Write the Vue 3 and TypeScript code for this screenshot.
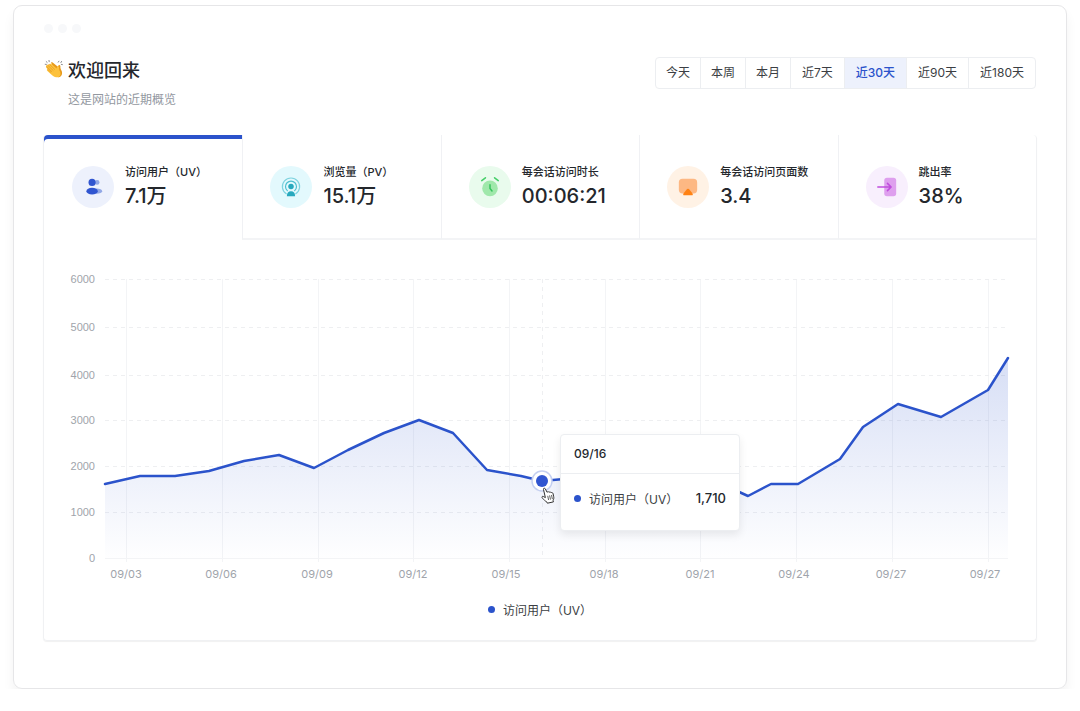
<script setup lang="ts">
import { computed, ref } from 'vue'

type Point = [number, number]

const ranges = ['今天', '本周', '本月', '近7天', '近30天', '近90天', '近180天']
const activeRange = ref('近30天')

const stats = [
  { id: 'users', label: '访问用户（UV）', value: '7.1万' },
  { id: 'views', label: '浏览量（PV）', value: '15.1万' },
  { id: 'time', label: '每会话访问时长', value: '00:06:21' },
  { id: 'pages', label: '每会话访问页面数', value: '3.4' },
  { id: 'bounce', label: '跳出率', value: '38%' },
]
const activeStat = ref('users')

const chart = { width: 992, height: 350, left: 61, right: 964, top: 39, bottom: 318 }

const rows = [
  { label: '6000', y: 39 },
  { label: '5000', y: 87 },
  { label: '4000', y: 135 },
  { label: '3000', y: 180 },
  { label: '2000', y: 226 },
  { label: '1000', y: 272 },
  { label: '0', y: 318 },
]

const columns = [
  { label: '09/03', x: 82, textX: 82 },
  { label: '09/06', x: 178, textX: 177 },
  { label: '09/09', x: 274, textX: 273 },
  { label: '09/12', x: 369, textX: 369 },
  { label: '09/15', x: 465, textX: 462 },
  { label: '09/18', x: 561, textX: 560 },
  { label: '09/21', x: 656, textX: 656 },
  { label: '09/24', x: 752, textX: 750 },
  { label: '09/27', x: 848, textX: 847 },
  { label: '09/27', x: 944, textX: 941 },
]

const points: Point[] = [
  [61, 244], [96, 236], [131, 236], [165, 231], [200, 221], [235, 215], [270, 228],
  [304, 210], [340, 193], [375, 180], [409, 193], [443, 230], [477, 236], [498, 241],
  [520, 239], [600, 232], [660, 236], [704, 256], [727, 244], [754, 244], [796, 219],
  [819, 187], [854, 164], [897, 177], [944, 150], [964, 118],
]
const hover: Point = [498, 241]

const linePath = computed(() => 'M' + points.map((p) => p.join(' ')).join(' L'))
const areaPath = computed(
  () => `${linePath.value} L${chart.right} ${chart.bottom} L${chart.left} ${chart.bottom} Z`,
)
const tooltipPlace = computed(() => ({
  left: `${((hover[0] + 18) / chart.width) * 100}%`,
  top: `${((hover[1] - 47) / chart.height) * 100}%`,
}))
</script>

<template>
  <main class="window">
    <div class="dots" aria-hidden="true"><i></i><i></i><i></i></div>

    <header class="header">
      <div class="welcome">
        <svg class="clap" viewBox="0 0 20 20" aria-hidden="true">
          <g fill="none" stroke="#8d8f93" stroke-width="1" stroke-linecap="round">
            <path d="M2.2 2.6l1 .9M5 1.4l.2 1.3M1.2 5.3l1.2.1M14.2 3.2l.7-1M17.6 2.4l-.7 1.2M18.4 5.6l-1.1-.2" />
          </g>
          <path d="M7 3.6c.8-.8 1.8-.2 2.6.6l4.3 3.6c.3-1.1.7-2 1.7-1.8 1 .3.8 1.5.8 2.7.1 1.6 1.8 3 1.7 5.3 0 2.6-1.8 4.4-4 4.2z" fill="#e79a1c" />
          <path d="M2.4 7.2c-.4-.9.6-1.6 1.3-1 .1-1 1.1-1.4 1.9-.7.3-.9 1.4-1 2.1-.3l4.9 4.4c.3-1.2.6-2.5 1.6-2.4 1.1.1.9 1.5.9 2.7.1 1.6 1.6 2.9 1.4 5-.2 2.4-2 3.7-4.4 3.3-2.7-.5-6.3-3.9-8.9-6.5-.7-.7-.4-1.6.4-1.5l-1.3-1.5c-.5-.6-.4-1.2.1-1.5z" fill="#fdc23c" />
          <path d="M3.7 6.2l5.4 5.2M5.6 5.5l5 4.8M2.4 7.2l5.3 5.3M3.6 10.2l3.2 3.1" fill="none" stroke="#dc8f1d" stroke-width=".6" stroke-linecap="round" />
        </svg>
        <div>
          <h1>欢迎回来</h1>
          <p>这是网站的近期概览</p>
        </div>
      </div>

      <nav class="ranges" aria-label="时间范围">
        <button
          v-for="range in ranges"
          :key="range"
          type="button"
          :class="{ active: range === activeRange, wide: range.length > 2 }"
          @click="activeRange = range"
        >{{ range }}</button>
      </nav>
    </header>

    <section class="panel">
      <div class="stats">
        <button
          v-for="stat in stats"
          :key="stat.id"
          type="button"
          class="stat"
          :class="{ active: stat.id === activeStat }"
          @click="activeStat = stat.id"
        >
          <span class="badge" :class="stat.id">
            <svg v-if="stat.id === 'users'" viewBox="0 0 24 24" aria-hidden="true">
              <circle cx="16.5" cy="7" r="2.6" fill="#92a8e6" />
              <ellipse cx="16" cy="16.5" rx="6" ry="2.8" fill="#92a8e6" />
              <circle cx="11" cy="7" r="3.9" fill="#3055d0" />
              <ellipse cx="11" cy="16.5" rx="6.2" ry="3.7" fill="#3055d0" />
            </svg>
            <svg v-else-if="stat.id === 'views'" viewBox="0 0 24 24" aria-hidden="true">
              <g fill="none" stroke-linecap="round">
                <path d="M6.8 19.4a9.4 9.4 0 1 1 10.4 0" stroke="#7fd3df" stroke-width="1.3" />
                <path d="M8 16a6 6 0 1 1 8 0" stroke="#4dbfd0" stroke-width="1.3" />
              </g>
              <circle cx="12" cy="11.5" r="3" fill="#27a9be" />
              <path d="M7.5 22c0-3.8 1.7-5.500 4.500-5.500s4.500 1.700 4.500 5.500z" fill="#27a9be" />
            </svg>
            <svg v-else-if="stat.id === 'time'" viewBox="0 0 24 24" aria-hidden="true">
              <circle cx="12" cy="13.5" r="8.5" fill="#a0e8ab" />
              <path d="M3 5l4-3M17 2l4 3" fill="none" stroke="#45cf68" stroke-width="1.7" stroke-linecap="round" />
              <path d="M12 9.5v4l2.2 2.8" fill="none" stroke="#35c45b" stroke-width="1.6" stroke-linecap="round" />
            </svg>
            <svg v-else-if="stat.id === 'pages'" viewBox="0 0 24 24" aria-hidden="true">
              <rect x="2" y="3" width="20" height="16" rx="4" fill="#fdb883" />
              <path d="M11 14.3q1-.9 2 0l3.6 4.200q1.600 2.500-.6 2.500H8q-2.200 0-.6-2.500z" fill="#ff8214" />
            </svg>
            <svg v-else viewBox="0 0 24 24" aria-hidden="true">
              <rect x="9" y="2" width="13" height="20" rx="3" fill="#de9fee" />
              <path d="M2 12h14M12.5 8l4 4-4 4" fill="none" stroke="#c04ddd" stroke-width="1.7" stroke-linecap="round" stroke-linejoin="round" />
            </svg>
          </span>
          <span class="figures">
            <span class="label">{{ stat.label }}</span>
            <span class="value">{{ stat.value }}</span>
          </span>
        </button>
      </div>

      <div class="chart">
        <svg class="plot" :viewBox="`0 0 ${chart.width} ${chart.height}`" role="img" aria-label="访问用户（UV）">
          <defs>
            <linearGradient id="area-fill" gradientUnits="userSpaceOnUse" x1="0" y1="117" x2="0" y2="318">
              <stop offset="0" stop-color="#2b53cb" stop-opacity=".19" />
              <stop offset="1" stop-color="#2b53cb" stop-opacity=".005" />
            </linearGradient>
          </defs>

          <g class="grid">
            <line v-for="(column, i) in columns" :key="i" :x1="column.x + 0.5" :x2="column.x + 0.5" :y1="chart.top" :y2="chart.bottom + 4" />
            <line
              v-for="row in rows"
              :key="row.label"
              :class="{ dashed: row.label !== '0' }"
              :x1="chart.left"
              :x2="chart.right"
              :y1="row.y + 0.5"
              :y2="row.y + 0.5"
            />
            <line class="dashed" :x1="hover[0] + 0.5" :x2="hover[0] + 0.5" :y1="chart.top" :y2="chart.bottom" />
          </g>

          <path :d="areaPath" fill="url(#area-fill)" />
          <path class="line" :d="linePath" />

          <g class="row-labels">
            <text v-for="row in rows" :key="row.label" x="51" :y="row.y + 4">{{ row.label }}</text>
          </g>
          <g class="column-labels">
            <text v-for="(column, i) in columns" :key="i" :x="column.textX" y="338">{{ column.label }}</text>
          </g>

          <g :transform="`translate(${hover[0]} ${hover[1]})`">
            <circle r="10" fill="#fff" stroke="#c5d0f1" stroke-width="1.5" />
            <circle r="6" fill="#3055d0" />
            <path
              d="M1.5 8.6c-.6-1.2 1.2-2 1.8-.7l1.8 3.4c.5-.8 1.6-.8 2 0 .6-.6 1.6-.4 1.9.4.8-.5 1.8 0 2 .8l.7 3.2c.3 1.4 0 2.7-.6 3.7l.3 1.5-6 1.3-.7-1.4c-1.5-.6-2.8-2-4.1-3.5-1.4-1.3-.2-2.4 1-1.7l1.8 1z"
              fill="#fff"
              stroke="#333"
              stroke-linejoin="round"
            />
            <path d="M5.8 15.2l.7 3.4M7.7 14.8l.7 3.4M9.6 14.4l.7 3.4" stroke="#333" stroke-width=".8" stroke-linecap="round" />
          </g>
        </svg>

        <div class="tooltip" :style="tooltipPlace">
          <div class="tooltip-date">09/16</div>
          <div class="tooltip-row">
            <i class="dot"></i>
            <span>访问用户（UV）</span>
            <strong>1,710</strong>
          </div>
        </div>
      </div>

      <div class="legend"><i class="dot"></i><span>访问用户（UV）</span></div>
    </section>
  </main>
</template>

<style>
body {
  background: #fff;
}
</style>

<style scoped>
.window {
  box-sizing: border-box;
  margin: 5px 13px 0;
  padding: 18px 29px 47px;
  border: 1px solid #e6e6e8;
  border-radius: 9px;
  box-shadow: 0 8px 12px rgba(0, 0, 0, 0.05);
  color: #24272c;
  font-family: Inter, 'Noto Sans CJK SC', sans-serif;
  font-size: 12px;
}

.dots {
  display: flex;
  gap: 5px;
  padding-left: 1px;
}

.dots i {
  width: 9px;
  height: 9px;
  border-radius: 50%;
  background: #f7f8fa;
}

.header {
  display: flex;
  justify-content: space-between;
  align-items: flex-start;
  height: 78px;
  padding: 24px 1px 0;
}

.welcome {
  display: flex;
  gap: 4px;
}

.clap {
  width: 20px;
  height: 20px;
  margin-top: 2px;
}

h1 {
  margin: 0;
  font-size: 18px;
  font-weight: 500;
  line-height: 28px;
}

p {
  margin: 5px 0 0;
  color: #93989f;
  font-size: 12px;
  line-height: 20px;
}

button {
  margin: 0;
  border: 0;
  background: none;
  color: inherit;
  font: inherit;
  cursor: pointer;
}

.ranges {
  display: flex;
  border: 1px solid #eceef1;
  border-radius: 4px;
  overflow: hidden;
}

.ranges button {
  padding: 0 10px;
  line-height: 30px;
  color: #3b3e43;
}

.ranges button.wide {
  padding: 0 11px;
}

.ranges button + button {
  border-left: 1px solid #eceef1;
}

.ranges button.active {
  background: #edf1fc;
  color: #2b53cb;
  font-weight: 500;
}

.panel {
  border: 1px solid #f0f1f3;
  border-top: 0;
  border-radius: 4px;
  box-shadow: 0 1px 1px rgba(0, 0, 0, 0.06);
}

.stats {
  display: grid;
  grid-template-columns: repeat(5, 1fr);
}

.stat {
  display: flex;
  align-items: center;
  gap: 11px;
  height: 105px;
  padding: 0 0 0 27px;
  border-left: 1px solid #f0f1f4;
  border-bottom: 2px solid #f3f4f6;
  text-align: left;
}

.stat:first-child {
  padding-left: 28px;
  border-left: 0;
}

.stat.active {
  border-bottom-color: transparent;
  border-top-left-radius: 4px;
  box-shadow: inset 0 4px #2b53cb;
}

.badge {
  display: flex;
  flex: none;
  align-items: center;
  justify-content: center;
  width: 42px;
  height: 42px;
  border-radius: 50%;
}

.badge svg {
  width: 22px;
  height: 22px;
}

.badge.users {
  background: #edf1fc;
}

.badge.views {
  background: #e3f9fd;
}

.badge.time {
  background: #e9fbed;
}

.badge.pages {
  background: #fff2e5;
}

.badge.bounce {
  background: #f8effd;
}

.figures {
  display: flex;
  flex-direction: column;
}

.label {
  font-size: 11px;
  font-weight: 500;
  line-height: 18px;
  white-space: nowrap;
}

.value {
  font-size: 20px;
  font-weight: 500;
  line-height: 30px;
}

.chart {
  position: relative;
}

.plot {
  display: block;
  width: 100%;
}

.grid line {
  stroke: #f3f4f6;
}

.grid .dashed {
  stroke: #eeeff1;
  stroke-dasharray: 4 4;
}

.line {
  fill: none;
  stroke: #2b53cb;
  stroke-width: 2.5px;
  stroke-linejoin: round;
  stroke-linecap: round;
}

.row-labels {
  fill: #a0a4ab;
  font: 11px 'Liberation Sans', sans-serif;
  text-anchor: end;
}

.column-labels {
  fill: #a0a4ab;
  font: 11px Inter, sans-serif;
  text-anchor: middle;
}

.tooltip {
  position: absolute;
  box-sizing: border-box;
  width: 180px;
  border: 1px solid #eceef1;
  border-radius: 4px;
  background: #fff;
  box-shadow: 0 4px 8px rgba(0, 0, 0, 0.08);
}

.tooltip-date {
  padding: 0 13px;
  border-bottom: 1px solid #eceef1;
  font-weight: 500;
  line-height: 38px;
}

.tooltip-row {
  display: flex;
  align-items: center;
  height: 48px;
  padding: 0 13px 8px;
  color: #3b3e43;
}

.tooltip-row strong {
  margin-left: auto;
  color: #24272c;
  font-size: 13px;
  font-weight: 500;
}

.dot {
  width: 7px;
  height: 7px;
  margin-right: 8px;
  border-radius: 50%;
  background: #2b53cb;
}

.legend {
  display: flex;
  align-items: center;
  justify-content: center;
  height: 38px;
  padding-bottom: 12px;
  color: #3b3e43;
}
</style>
